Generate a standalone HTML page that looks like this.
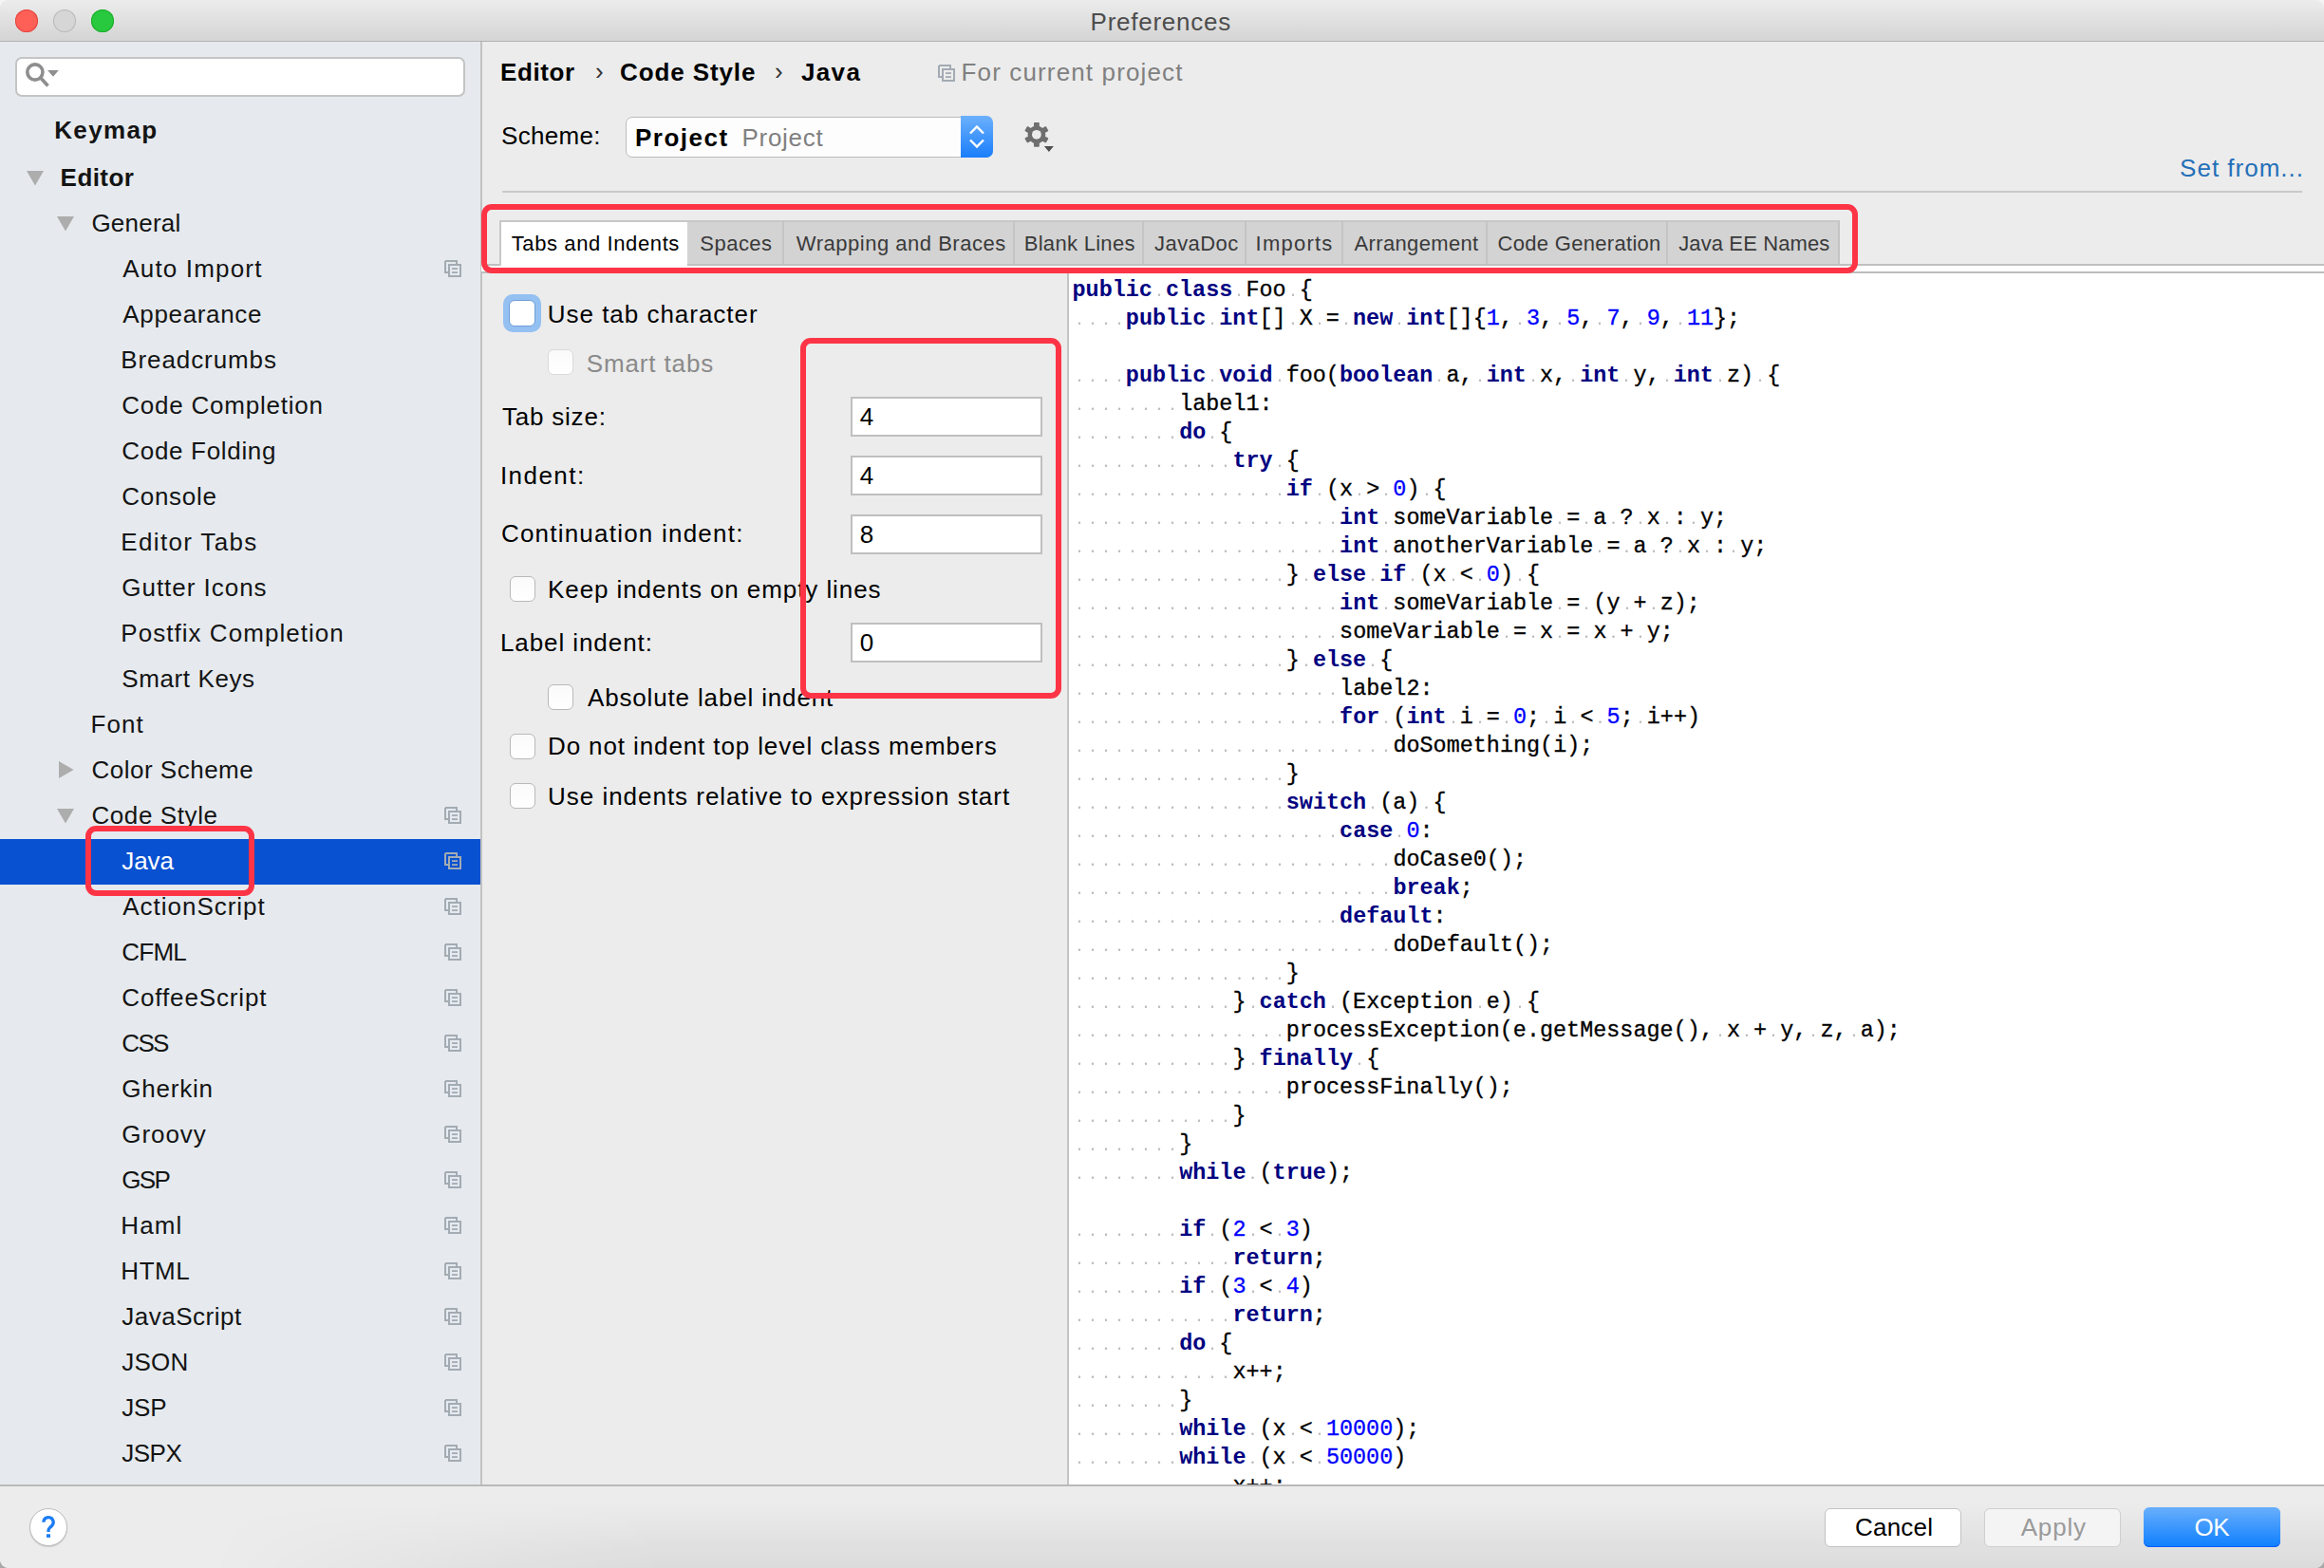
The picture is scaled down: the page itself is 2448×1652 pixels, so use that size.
<!DOCTYPE html>
<html><head><meta charset='utf-8'><style>
html,body{margin:0;padding:0;width:2448px;height:1652px;overflow:hidden;background:linear-gradient(#f4f4f4 0,#f4f4f4 50%,#a8a8a8 50%)}
.ab{position:absolute}
.t{position:absolute;font-family:"Liberation Sans",sans-serif;line-height:40px;white-space:pre}
.cb{background:linear-gradient(#fafafa,#fff);border:1.5px solid #b9b9b9;border-radius:6px;box-sizing:border-box}
.fld{background:#fff;border:2px solid #bfbfbf;box-sizing:border-box}
.code{position:absolute;left:1129.5px;top:291px;font-family:"Liberation Mono",monospace;font-size:23.45px;line-height:30px;white-space:pre;color:#000;-webkit-text-stroke:0.3px currentColor}
.code b{color:#000080;font-weight:700;-webkit-text-stroke:0}
.code u{color:#0000ff;text-decoration:none}
.code i{color:transparent;font-style:normal;-webkit-text-stroke:0;background:radial-gradient(circle at 50% 18.7px,#bdbdbd 0,#bdbdbd 0.9px,rgba(189,189,189,0) 1.6px)}
.red{position:absolute;border:6px solid #fd3446;border-radius:11px;box-sizing:border-box}
</style></head><body>
<div id='win' class='ab' style='left:0;top:0;width:2448px;height:1652px;border-radius:9px;overflow:hidden;background:#ececec'>
<!-- title bar -->
<div class='ab' style='left:0;top:0;width:2448px;height:43px;background:linear-gradient(#ececec,#d4d4d4)'></div>
<div class='ab' style='left:0;top:43px;width:2448px;height:1px;background:#b1b1b1'></div>
<div class='ab' style='left:16px;top:10px;width:24px;height:24px;border-radius:50%;background:#fe5f57;box-shadow:inset 0 0 0 1px #e2463f'></div>
<div class='ab' style='left:56px;top:10px;width:24px;height:24px;border-radius:50%;background:#d6d6d6;box-shadow:inset 0 0 0 1px #b9b9b9'></div>
<div class='ab' style='left:96px;top:10px;width:24px;height:24px;border-radius:50%;background:#28c93f;box-shadow:inset 0 0 0 1px #1aab29'></div>
<!-- sidebar -->
<div class='ab' style='left:0;top:44px;width:506px;height:1520px;background:#e6eaee'></div>
<div class='ab' style='left:506px;top:44px;width:2px;height:1520px;background:#c2c2c2'></div>
<div class='ab' style='left:16px;top:60px;width:474px;height:42px;background:#fff;border:2px solid #c4c4c4;border-radius:7px;box-sizing:border-box'></div>
<svg class='ab' style='left:24px;top:64px' width='40' height='30' viewBox='0 0 40 30'>
<circle cx='12.9' cy='12' r='8.1' fill='none' stroke='#8e8e8e' stroke-width='3.6'/>
<path d='M18.8 18L26.5 26.5' stroke='#8e8e8e' stroke-width='3.6'/>
<path d='M26.1 10H37.8L32 16.7Z' fill='#8e8e8e'/></svg>
<div class='ab' style='left:0;top:884px;width:506px;height:48px;background:#0851d1'></div>
<svg class='ab' style='left:28px;top:180px' width='18' height='15.5'><path d='M0 0H18L9.0 15.5Z' fill='#adadad'/></svg><svg class='ab' style='left:60px;top:228px' width='18' height='15.5'><path d='M0 0H18L9.0 15.5Z' fill='#adadad'/></svg><svg class='ab' style='left:62px;top:802px' width='15.6' height='18'><path d='M0 0L15.6 9.0L0 18Z' fill='#adadad'/></svg><svg class='ab' style='left:60px;top:852px' width='18' height='15.5'><path d='M0 0H18L9.0 15.5Z' fill='#adadad'/></svg>
<svg class='ab' style='left:468px;top:274px' width='20' height='20' viewBox='0 0 20 20'>
<path d='M1 1H13V4.5M4.5 13H1V1' fill='none' stroke='#a3abb3' stroke-width='2'/>
<rect x='5' y='5' width='12' height='12' fill='none' stroke='#a3abb3' stroke-width='2'/>
<rect x='8' y='8.2' width='6' height='1.8' fill='#a3abb3'/><rect x='8' y='12.2' width='6' height='1.8' fill='#a3abb3'/></svg>
<svg class='ab' style='left:468px;top:850px' width='20' height='20' viewBox='0 0 20 20'>
<path d='M1 1H13V4.5M4.5 13H1V1' fill='none' stroke='#a3abb3' stroke-width='2'/>
<rect x='5' y='5' width='12' height='12' fill='none' stroke='#a3abb3' stroke-width='2'/>
<rect x='8' y='8.2' width='6' height='1.8' fill='#a3abb3'/><rect x='8' y='12.2' width='6' height='1.8' fill='#a3abb3'/></svg>
<svg class='ab' style='left:468px;top:898px' width='20' height='20' viewBox='0 0 20 20'>
<path d='M1 1H13V4.5M4.5 13H1V1' fill='none' stroke='#a3abb3' stroke-width='2'/>
<rect x='5' y='5' width='12' height='12' fill='none' stroke='#a3abb3' stroke-width='2'/>
<rect x='8' y='8.2' width='6' height='1.8' fill='#a3abb3'/><rect x='8' y='12.2' width='6' height='1.8' fill='#a3abb3'/></svg>
<svg class='ab' style='left:468px;top:946px' width='20' height='20' viewBox='0 0 20 20'>
<path d='M1 1H13V4.5M4.5 13H1V1' fill='none' stroke='#a3abb3' stroke-width='2'/>
<rect x='5' y='5' width='12' height='12' fill='none' stroke='#a3abb3' stroke-width='2'/>
<rect x='8' y='8.2' width='6' height='1.8' fill='#a3abb3'/><rect x='8' y='12.2' width='6' height='1.8' fill='#a3abb3'/></svg>
<svg class='ab' style='left:468px;top:994px' width='20' height='20' viewBox='0 0 20 20'>
<path d='M1 1H13V4.5M4.5 13H1V1' fill='none' stroke='#a3abb3' stroke-width='2'/>
<rect x='5' y='5' width='12' height='12' fill='none' stroke='#a3abb3' stroke-width='2'/>
<rect x='8' y='8.2' width='6' height='1.8' fill='#a3abb3'/><rect x='8' y='12.2' width='6' height='1.8' fill='#a3abb3'/></svg>
<svg class='ab' style='left:468px;top:1042px' width='20' height='20' viewBox='0 0 20 20'>
<path d='M1 1H13V4.5M4.5 13H1V1' fill='none' stroke='#a3abb3' stroke-width='2'/>
<rect x='5' y='5' width='12' height='12' fill='none' stroke='#a3abb3' stroke-width='2'/>
<rect x='8' y='8.2' width='6' height='1.8' fill='#a3abb3'/><rect x='8' y='12.2' width='6' height='1.8' fill='#a3abb3'/></svg>
<svg class='ab' style='left:468px;top:1090px' width='20' height='20' viewBox='0 0 20 20'>
<path d='M1 1H13V4.5M4.5 13H1V1' fill='none' stroke='#a3abb3' stroke-width='2'/>
<rect x='5' y='5' width='12' height='12' fill='none' stroke='#a3abb3' stroke-width='2'/>
<rect x='8' y='8.2' width='6' height='1.8' fill='#a3abb3'/><rect x='8' y='12.2' width='6' height='1.8' fill='#a3abb3'/></svg>
<svg class='ab' style='left:468px;top:1138px' width='20' height='20' viewBox='0 0 20 20'>
<path d='M1 1H13V4.5M4.5 13H1V1' fill='none' stroke='#a3abb3' stroke-width='2'/>
<rect x='5' y='5' width='12' height='12' fill='none' stroke='#a3abb3' stroke-width='2'/>
<rect x='8' y='8.2' width='6' height='1.8' fill='#a3abb3'/><rect x='8' y='12.2' width='6' height='1.8' fill='#a3abb3'/></svg>
<svg class='ab' style='left:468px;top:1186px' width='20' height='20' viewBox='0 0 20 20'>
<path d='M1 1H13V4.5M4.5 13H1V1' fill='none' stroke='#a3abb3' stroke-width='2'/>
<rect x='5' y='5' width='12' height='12' fill='none' stroke='#a3abb3' stroke-width='2'/>
<rect x='8' y='8.2' width='6' height='1.8' fill='#a3abb3'/><rect x='8' y='12.2' width='6' height='1.8' fill='#a3abb3'/></svg>
<svg class='ab' style='left:468px;top:1234px' width='20' height='20' viewBox='0 0 20 20'>
<path d='M1 1H13V4.5M4.5 13H1V1' fill='none' stroke='#a3abb3' stroke-width='2'/>
<rect x='5' y='5' width='12' height='12' fill='none' stroke='#a3abb3' stroke-width='2'/>
<rect x='8' y='8.2' width='6' height='1.8' fill='#a3abb3'/><rect x='8' y='12.2' width='6' height='1.8' fill='#a3abb3'/></svg>
<svg class='ab' style='left:468px;top:1282px' width='20' height='20' viewBox='0 0 20 20'>
<path d='M1 1H13V4.5M4.5 13H1V1' fill='none' stroke='#a3abb3' stroke-width='2'/>
<rect x='5' y='5' width='12' height='12' fill='none' stroke='#a3abb3' stroke-width='2'/>
<rect x='8' y='8.2' width='6' height='1.8' fill='#a3abb3'/><rect x='8' y='12.2' width='6' height='1.8' fill='#a3abb3'/></svg>
<svg class='ab' style='left:468px;top:1330px' width='20' height='20' viewBox='0 0 20 20'>
<path d='M1 1H13V4.5M4.5 13H1V1' fill='none' stroke='#a3abb3' stroke-width='2'/>
<rect x='5' y='5' width='12' height='12' fill='none' stroke='#a3abb3' stroke-width='2'/>
<rect x='8' y='8.2' width='6' height='1.8' fill='#a3abb3'/><rect x='8' y='12.2' width='6' height='1.8' fill='#a3abb3'/></svg>
<svg class='ab' style='left:468px;top:1378px' width='20' height='20' viewBox='0 0 20 20'>
<path d='M1 1H13V4.5M4.5 13H1V1' fill='none' stroke='#a3abb3' stroke-width='2'/>
<rect x='5' y='5' width='12' height='12' fill='none' stroke='#a3abb3' stroke-width='2'/>
<rect x='8' y='8.2' width='6' height='1.8' fill='#a3abb3'/><rect x='8' y='12.2' width='6' height='1.8' fill='#a3abb3'/></svg>
<svg class='ab' style='left:468px;top:1426px' width='20' height='20' viewBox='0 0 20 20'>
<path d='M1 1H13V4.5M4.5 13H1V1' fill='none' stroke='#a3abb3' stroke-width='2'/>
<rect x='5' y='5' width='12' height='12' fill='none' stroke='#a3abb3' stroke-width='2'/>
<rect x='8' y='8.2' width='6' height='1.8' fill='#a3abb3'/><rect x='8' y='12.2' width='6' height='1.8' fill='#a3abb3'/></svg>
<svg class='ab' style='left:468px;top:1474px' width='20' height='20' viewBox='0 0 20 20'>
<path d='M1 1H13V4.5M4.5 13H1V1' fill='none' stroke='#a3abb3' stroke-width='2'/>
<rect x='5' y='5' width='12' height='12' fill='none' stroke='#a3abb3' stroke-width='2'/>
<rect x='8' y='8.2' width='6' height='1.8' fill='#a3abb3'/><rect x='8' y='12.2' width='6' height='1.8' fill='#a3abb3'/></svg>
<svg class='ab' style='left:468px;top:1522px' width='20' height='20' viewBox='0 0 20 20'>
<path d='M1 1H13V4.5M4.5 13H1V1' fill='none' stroke='#a3abb3' stroke-width='2'/>
<rect x='5' y='5' width='12' height='12' fill='none' stroke='#a3abb3' stroke-width='2'/>
<rect x='8' y='8.2' width='6' height='1.8' fill='#a3abb3'/><rect x='8' y='12.2' width='6' height='1.8' fill='#a3abb3'/></svg>
<!-- right panel -->
<div class='ab' style='left:1124px;top:288px;width:2px;height:1276px;background:#c4c4c4'></div>
<div class='ab' style='left:1126px;top:288px;width:1322px;height:1276px;background:#fff'></div>
<div class='ab' style='left:507px;top:278px;width:1941px;height:2px;background:#c0c0c0'></div>
<div class='ab' style='left:507px;top:280px;width:1941px;height:6px;background:#fff'></div>
<div class='ab' style='left:507px;top:286px;width:1941px;height:2px;background:#bdbdbd'></div>
<div class='ab' style='left:529px;top:201px;width:1896px;height:2px;background:#c9c9c9'></div>
<div class='ab' style='left:525.5px;top:232px;width:198.29999999999995px;height:48px;background:#fff;border-left:2px solid #c8c8c8;border-top:2px solid #c8c8c8;box-sizing:border-box'></div>
<div class='ab' style='left:723.8px;top:232px;width:102.20000000000005px;height:46px;background:#d3d3d3;border-right:2px solid #c4c4c4;border-top:2px solid #c8c8c8;box-sizing:border-box'></div>
<div class='ab' style='left:826px;top:232px;width:242.70000000000005px;height:46px;background:#d3d3d3;border-right:2px solid #c4c4c4;border-top:2px solid #c8c8c8;box-sizing:border-box'></div>
<div class='ab' style='left:1068.7px;top:232px;width:135.89999999999986px;height:46px;background:#d3d3d3;border-right:2px solid #c4c4c4;border-top:2px solid #c8c8c8;box-sizing:border-box'></div>
<div class='ab' style='left:1204.6px;top:232px;width:108.20000000000005px;height:46px;background:#d3d3d3;border-right:2px solid #c4c4c4;border-top:2px solid #c8c8c8;box-sizing:border-box'></div>
<div class='ab' style='left:1312.8px;top:232px;width:102.0px;height:46px;background:#d3d3d3;border-right:2px solid #c4c4c4;border-top:2px solid #c8c8c8;box-sizing:border-box'></div>
<div class='ab' style='left:1414.8px;top:232px;width:152.0px;height:46px;background:#d3d3d3;border-right:2px solid #c4c4c4;border-top:2px solid #c8c8c8;box-sizing:border-box'></div>
<div class='ab' style='left:1566.8px;top:232px;width:190.20000000000005px;height:46px;background:#d3d3d3;border-right:2px solid #c4c4c4;border-top:2px solid #c8c8c8;box-sizing:border-box'></div>
<div class='ab' style='left:1757px;top:232px;width:180.5px;height:46px;background:#d3d3d3;border-right:2px solid #c4c4c4;border-top:2px solid #c8c8c8;box-sizing:border-box'></div>
<!-- combo -->
<div class='ab' style='left:658.5px;top:122.5px;width:387px;height:43px;background:#fdfdfd;border:1.5px solid #bcbcbc;border-radius:7px;box-sizing:border-box'></div>
<div class='ab' style='left:1012px;top:122px;width:34px;height:44px;background:linear-gradient(#6cb0fc,#1a7efb);border-radius:0 7px 7px 0'></div>
<svg class='ab' style='left:1012px;top:122px' width='34' height='44'><path d='M10 18.5L17 11.5L24 18.5M10 25.5L17 32.5L24 25.5' fill='none' stroke='#fff' stroke-width='2.4'/></svg>
<svg class='ab' style='left:1076px;top:126px' width='36' height='36' viewBox='0 0 36 36'>
<g transform='translate(15.9 15.8)' fill='#6e6e6e'>
<circle r='9.4'/>
<rect x='-2.9' y='-12.9' width='5.8' height='7' rx='0.8'/>
<rect x='-2.9' y='-12.9' width='5.8' height='7' rx='0.8' transform='rotate(60)'/>
<rect x='-2.9' y='-12.9' width='5.8' height='7' rx='0.8' transform='rotate(120)'/>
<rect x='-2.9' y='-12.9' width='5.8' height='7' rx='0.8' transform='rotate(180)'/>
<rect x='-2.9' y='-12.9' width='5.8' height='7' rx='0.8' transform='rotate(240)'/>
<rect x='-2.9' y='-12.9' width='5.8' height='7' rx='0.8' transform='rotate(300)'/>
<circle r='4.9' fill='#ececec'/></g>
<path d='M23.9 27.9H33.9L28.9 33.9Z' fill='#4f4f4f'/></svg>
<svg class='ab' style='left:988px;top:68px' width='20' height='20' viewBox='0 0 20 20'>
<path d='M1 1H13V4.5M4.5 13H1V1' fill='none' stroke='#a3abb3' stroke-width='2'/>
<rect x='5' y='5' width='12' height='12' fill='none' stroke='#a3abb3' stroke-width='2'/>
<rect x='8' y='8.2' width='6' height='1.8' fill='#a3abb3'/><rect x='8' y='12.2' width='6' height='1.8' fill='#a3abb3'/></svg>
<div class='t' style='left:627px;top:55px;font-size:26px;color:#333'>›</div>
<div class='t' style='left:816px;top:55px;font-size:26px;color:#333'>›</div>
<div class='ab cb' style='left:576.5px;top:368.3px;width:27px;height:27px;border-color:#dadada'></div><div class='ab cb' style='left:536.5px;top:606.5px;width:27px;height:27px;border-color:#b9b9b9'></div><div class='ab cb' style='left:576.5px;top:720.5px;width:27px;height:27px;border-color:#b9b9b9'></div><div class='ab cb' style='left:536.5px;top:772.5px;width:27px;height:27px;border-color:#b9b9b9'></div><div class='ab cb' style='left:536.5px;top:824.5px;width:27px;height:27px;border-color:#b9b9b9'></div><div class='ab' style='left:530px;top:310px;width:40px;height:40px;border-radius:10px;background:#94c0f2'></div><div class='ab' style='left:536px;top:316px;width:28px;height:28px;border-radius:6px;background:#fff;border:1.5px solid #6f9fd8;box-sizing:border-box'></div>
<div class='ab fld' style='left:896px;top:418px;width:202px;height:42px'></div><div class='ab fld' style='left:896px;top:480px;width:202px;height:42px'></div><div class='ab fld' style='left:896px;top:542px;width:202px;height:42px'></div><div class='ab fld' style='left:896px;top:656px;width:202px;height:42px'></div>
<div class='code'><b>public</b><i>.</i><b>class</b><i>.</i>Foo<i>.</i>{
<i>.</i><i>.</i><i>.</i><i>.</i><b>public</b><i>.</i><b>int</b>[]<i>.</i>X<i>.</i>=<i>.</i><b>new</b><i>.</i><b>int</b>[]{<u>1</u>,<i>.</i><u>3</u>,<i>.</i><u>5</u>,<i>.</i><u>7</u>,<i>.</i><u>9</u>,<i>.</i><u>11</u>};

<i>.</i><i>.</i><i>.</i><i>.</i><b>public</b><i>.</i><b>void</b><i>.</i>foo(<b>boolean</b><i>.</i>a,<i>.</i><b>int</b><i>.</i>x,<i>.</i><b>int</b><i>.</i>y,<i>.</i><b>int</b><i>.</i>z)<i>.</i>{
<i>.</i><i>.</i><i>.</i><i>.</i><i>.</i><i>.</i><i>.</i><i>.</i>label1:
<i>.</i><i>.</i><i>.</i><i>.</i><i>.</i><i>.</i><i>.</i><i>.</i><b>do</b><i>.</i>{
<i>.</i><i>.</i><i>.</i><i>.</i><i>.</i><i>.</i><i>.</i><i>.</i><i>.</i><i>.</i><i>.</i><i>.</i><b>try</b><i>.</i>{
<i>.</i><i>.</i><i>.</i><i>.</i><i>.</i><i>.</i><i>.</i><i>.</i><i>.</i><i>.</i><i>.</i><i>.</i><i>.</i><i>.</i><i>.</i><i>.</i><b>if</b><i>.</i>(x<i>.</i>&gt;<i>.</i><u>0</u>)<i>.</i>{
<i>.</i><i>.</i><i>.</i><i>.</i><i>.</i><i>.</i><i>.</i><i>.</i><i>.</i><i>.</i><i>.</i><i>.</i><i>.</i><i>.</i><i>.</i><i>.</i><i>.</i><i>.</i><i>.</i><i>.</i><b>int</b><i>.</i>someVariable<i>.</i>=<i>.</i>a<i>.</i>?<i>.</i>x<i>.</i>:<i>.</i>y;
<i>.</i><i>.</i><i>.</i><i>.</i><i>.</i><i>.</i><i>.</i><i>.</i><i>.</i><i>.</i><i>.</i><i>.</i><i>.</i><i>.</i><i>.</i><i>.</i><i>.</i><i>.</i><i>.</i><i>.</i><b>int</b><i>.</i>anotherVariable<i>.</i>=<i>.</i>a<i>.</i>?<i>.</i>x<i>.</i>:<i>.</i>y;
<i>.</i><i>.</i><i>.</i><i>.</i><i>.</i><i>.</i><i>.</i><i>.</i><i>.</i><i>.</i><i>.</i><i>.</i><i>.</i><i>.</i><i>.</i><i>.</i>}<i>.</i><b>else</b><i>.</i><b>if</b><i>.</i>(x<i>.</i>&lt;<i>.</i><u>0</u>)<i>.</i>{
<i>.</i><i>.</i><i>.</i><i>.</i><i>.</i><i>.</i><i>.</i><i>.</i><i>.</i><i>.</i><i>.</i><i>.</i><i>.</i><i>.</i><i>.</i><i>.</i><i>.</i><i>.</i><i>.</i><i>.</i><b>int</b><i>.</i>someVariable<i>.</i>=<i>.</i>(y<i>.</i>+<i>.</i>z);
<i>.</i><i>.</i><i>.</i><i>.</i><i>.</i><i>.</i><i>.</i><i>.</i><i>.</i><i>.</i><i>.</i><i>.</i><i>.</i><i>.</i><i>.</i><i>.</i><i>.</i><i>.</i><i>.</i><i>.</i>someVariable<i>.</i>=<i>.</i>x<i>.</i>=<i>.</i>x<i>.</i>+<i>.</i>y;
<i>.</i><i>.</i><i>.</i><i>.</i><i>.</i><i>.</i><i>.</i><i>.</i><i>.</i><i>.</i><i>.</i><i>.</i><i>.</i><i>.</i><i>.</i><i>.</i>}<i>.</i><b>else</b><i>.</i>{
<i>.</i><i>.</i><i>.</i><i>.</i><i>.</i><i>.</i><i>.</i><i>.</i><i>.</i><i>.</i><i>.</i><i>.</i><i>.</i><i>.</i><i>.</i><i>.</i><i>.</i><i>.</i><i>.</i><i>.</i>label2:
<i>.</i><i>.</i><i>.</i><i>.</i><i>.</i><i>.</i><i>.</i><i>.</i><i>.</i><i>.</i><i>.</i><i>.</i><i>.</i><i>.</i><i>.</i><i>.</i><i>.</i><i>.</i><i>.</i><i>.</i><b>for</b><i>.</i>(<b>int</b><i>.</i>i<i>.</i>=<i>.</i><u>0</u>;<i>.</i>i<i>.</i>&lt;<i>.</i><u>5</u>;<i>.</i>i++)
<i>.</i><i>.</i><i>.</i><i>.</i><i>.</i><i>.</i><i>.</i><i>.</i><i>.</i><i>.</i><i>.</i><i>.</i><i>.</i><i>.</i><i>.</i><i>.</i><i>.</i><i>.</i><i>.</i><i>.</i><i>.</i><i>.</i><i>.</i><i>.</i>doSomething(i);
<i>.</i><i>.</i><i>.</i><i>.</i><i>.</i><i>.</i><i>.</i><i>.</i><i>.</i><i>.</i><i>.</i><i>.</i><i>.</i><i>.</i><i>.</i><i>.</i>}
<i>.</i><i>.</i><i>.</i><i>.</i><i>.</i><i>.</i><i>.</i><i>.</i><i>.</i><i>.</i><i>.</i><i>.</i><i>.</i><i>.</i><i>.</i><i>.</i><b>switch</b><i>.</i>(a)<i>.</i>{
<i>.</i><i>.</i><i>.</i><i>.</i><i>.</i><i>.</i><i>.</i><i>.</i><i>.</i><i>.</i><i>.</i><i>.</i><i>.</i><i>.</i><i>.</i><i>.</i><i>.</i><i>.</i><i>.</i><i>.</i><b>case</b><i>.</i><u>0</u>:
<i>.</i><i>.</i><i>.</i><i>.</i><i>.</i><i>.</i><i>.</i><i>.</i><i>.</i><i>.</i><i>.</i><i>.</i><i>.</i><i>.</i><i>.</i><i>.</i><i>.</i><i>.</i><i>.</i><i>.</i><i>.</i><i>.</i><i>.</i><i>.</i>doCase0();
<i>.</i><i>.</i><i>.</i><i>.</i><i>.</i><i>.</i><i>.</i><i>.</i><i>.</i><i>.</i><i>.</i><i>.</i><i>.</i><i>.</i><i>.</i><i>.</i><i>.</i><i>.</i><i>.</i><i>.</i><i>.</i><i>.</i><i>.</i><i>.</i><b>break</b>;
<i>.</i><i>.</i><i>.</i><i>.</i><i>.</i><i>.</i><i>.</i><i>.</i><i>.</i><i>.</i><i>.</i><i>.</i><i>.</i><i>.</i><i>.</i><i>.</i><i>.</i><i>.</i><i>.</i><i>.</i><b>default</b>:
<i>.</i><i>.</i><i>.</i><i>.</i><i>.</i><i>.</i><i>.</i><i>.</i><i>.</i><i>.</i><i>.</i><i>.</i><i>.</i><i>.</i><i>.</i><i>.</i><i>.</i><i>.</i><i>.</i><i>.</i><i>.</i><i>.</i><i>.</i><i>.</i>doDefault();
<i>.</i><i>.</i><i>.</i><i>.</i><i>.</i><i>.</i><i>.</i><i>.</i><i>.</i><i>.</i><i>.</i><i>.</i><i>.</i><i>.</i><i>.</i><i>.</i>}
<i>.</i><i>.</i><i>.</i><i>.</i><i>.</i><i>.</i><i>.</i><i>.</i><i>.</i><i>.</i><i>.</i><i>.</i>}<i>.</i><b>catch</b><i>.</i>(Exception<i>.</i>e)<i>.</i>{
<i>.</i><i>.</i><i>.</i><i>.</i><i>.</i><i>.</i><i>.</i><i>.</i><i>.</i><i>.</i><i>.</i><i>.</i><i>.</i><i>.</i><i>.</i><i>.</i>processException(e.getMessage(),<i>.</i>x<i>.</i>+<i>.</i>y,<i>.</i>z,<i>.</i>a);
<i>.</i><i>.</i><i>.</i><i>.</i><i>.</i><i>.</i><i>.</i><i>.</i><i>.</i><i>.</i><i>.</i><i>.</i>}<i>.</i><b>finally</b><i>.</i>{
<i>.</i><i>.</i><i>.</i><i>.</i><i>.</i><i>.</i><i>.</i><i>.</i><i>.</i><i>.</i><i>.</i><i>.</i><i>.</i><i>.</i><i>.</i><i>.</i>processFinally();
<i>.</i><i>.</i><i>.</i><i>.</i><i>.</i><i>.</i><i>.</i><i>.</i><i>.</i><i>.</i><i>.</i><i>.</i>}
<i>.</i><i>.</i><i>.</i><i>.</i><i>.</i><i>.</i><i>.</i><i>.</i>}
<i>.</i><i>.</i><i>.</i><i>.</i><i>.</i><i>.</i><i>.</i><i>.</i><b>while</b><i>.</i>(<b>true</b>);

<i>.</i><i>.</i><i>.</i><i>.</i><i>.</i><i>.</i><i>.</i><i>.</i><b>if</b><i>.</i>(<u>2</u><i>.</i>&lt;<i>.</i><u>3</u>)
<i>.</i><i>.</i><i>.</i><i>.</i><i>.</i><i>.</i><i>.</i><i>.</i><i>.</i><i>.</i><i>.</i><i>.</i><b>return</b>;
<i>.</i><i>.</i><i>.</i><i>.</i><i>.</i><i>.</i><i>.</i><i>.</i><b>if</b><i>.</i>(<u>3</u><i>.</i>&lt;<i>.</i><u>4</u>)
<i>.</i><i>.</i><i>.</i><i>.</i><i>.</i><i>.</i><i>.</i><i>.</i><i>.</i><i>.</i><i>.</i><i>.</i><b>return</b>;
<i>.</i><i>.</i><i>.</i><i>.</i><i>.</i><i>.</i><i>.</i><i>.</i><b>do</b><i>.</i>{
<i>.</i><i>.</i><i>.</i><i>.</i><i>.</i><i>.</i><i>.</i><i>.</i><i>.</i><i>.</i><i>.</i><i>.</i>x++;
<i>.</i><i>.</i><i>.</i><i>.</i><i>.</i><i>.</i><i>.</i><i>.</i>}
<i>.</i><i>.</i><i>.</i><i>.</i><i>.</i><i>.</i><i>.</i><i>.</i><b>while</b><i>.</i>(x<i>.</i>&lt;<i>.</i><u>10000</u>);
<i>.</i><i>.</i><i>.</i><i>.</i><i>.</i><i>.</i><i>.</i><i>.</i><b>while</b><i>.</i>(x<i>.</i>&lt;<i>.</i><u>50000</u>)
<i>.</i><i>.</i><i>.</i><i>.</i><i>.</i><i>.</i><i>.</i><i>.</i><i>.</i><i>.</i><i>.</i><i>.</i>x++;</div>
<!-- bottom -->
<div class='ab' style='left:0;top:1564px;width:2448px;height:2px;background:#b9b9b9'></div>
<div class='ab' style='left:0;top:1566px;width:2448px;height:86px;background:#ececec'></div><div class='ab' style='left:0;top:1566px;width:2448px;height:86px;background:linear-gradient(rgba(0,0,0,0) 20%,rgba(0,0,0,.07));-webkit-mask-image:linear-gradient(to right,transparent 220px,#000 700px)'></div>
<div class='ab' style='left:31px;top:1589px;width:40px;height:40px;border-radius:50%;background:#fff;border:1.5px solid #bdbdbd;box-sizing:border-box;box-shadow:0 1px 1px rgba(0,0,0,.15)'></div>
<svg class='ab' style='left:31px;top:1589px' width='40' height='40'><path d='M14.9 14.8A5.15 5.15 0 1 1 23.6 18.5L21.2 20.9Q20 22.1 20 23.6V25' fill='none' stroke='#1b7cf5' stroke-width='3.3'/><rect x='18' y='27.3' width='4' height='3.6' fill='#1b7cf5'/></svg>
<div class='ab' style='left:1922px;top:1588.5px;width:144px;height:41px;background:#fff;border:1.5px solid #c2c2c2;border-radius:6px;box-sizing:border-box'></div>
<div class='ab' style='left:2090px;top:1588.5px;width:144px;height:41px;background:#f4f4f4;border:1.5px solid #cfcfcf;border-radius:6px;box-sizing:border-box'></div>
<div class='ab' style='left:2257.5px;top:1588px;width:144px;height:42px;background:linear-gradient(#69affc,#0e7ffe);border-radius:6px;box-shadow:inset 0 -1px 0 #0a5cf5'></div>
<div class='t' style='left:1148.6px;top:2.7px;font-size:26px;font-weight:400;color:#4d4d4d;letter-spacing:0.74px'>Preferences</div>
<div class='t' style='left:57.2px;top:117.2px;font-size:26px;font-weight:700;color:#141414;letter-spacing:1.36px'>Keymap</div>
<div class='t' style='left:63.6px;top:166.8px;font-size:26px;font-weight:700;color:#141414;letter-spacing:0.44px'>Editor</div>
<div class='t' style='left:96.4px;top:214.8px;font-size:26px;font-weight:400;color:#141414;letter-spacing:0.233px'>General</div>
<div class='t' style='left:129.3px;top:262.8px;font-size:26px;font-weight:400;color:#141414;letter-spacing:1.17px'>Auto Import</div>
<div class='t' style='left:129.3px;top:310.8px;font-size:26px;font-weight:400;color:#141414;letter-spacing:0.656px'>Appearance</div>
<div class='t' style='left:127.3px;top:358.8px;font-size:26px;font-weight:400;color:#141414;letter-spacing:0.9px'>Breadcrumbs</div>
<div class='t' style='left:128.3px;top:406.8px;font-size:26px;font-weight:400;color:#141414;letter-spacing:0.764px'>Code Completion</div>
<div class='t' style='left:128.3px;top:454.8px;font-size:26px;font-weight:400;color:#141414;letter-spacing:0.682px'>Code Folding</div>
<div class='t' style='left:128.3px;top:502.8px;font-size:26px;font-weight:400;color:#141414;letter-spacing:0.7px'>Console</div>
<div class='t' style='left:127.3px;top:550.8px;font-size:26px;font-weight:400;color:#141414;letter-spacing:1.34px'>Editor Tabs</div>
<div class='t' style='left:128.3px;top:598.8px;font-size:26px;font-weight:400;color:#141414;letter-spacing:0.973px'>Gutter Icons</div>
<div class='t' style='left:127.3px;top:646.8px;font-size:26px;font-weight:400;color:#141414;letter-spacing:1.041px'>Postfix Completion</div>
<div class='t' style='left:128.3px;top:694.8px;font-size:26px;font-weight:400;color:#141414;letter-spacing:0.6px'>Smart Keys</div>
<div class='t' style='left:95.4px;top:742.8px;font-size:26px;font-weight:400;color:#141414;letter-spacing:1.133px'>Font</div>
<div class='t' style='left:96.4px;top:790.8px;font-size:26px;font-weight:400;color:#141414;letter-spacing:0.509px'>Color Scheme</div>
<div class='t' style='left:96.4px;top:838.8px;font-size:26px;font-weight:400;color:#141414;letter-spacing:0.611px'>Code Style</div>
<div class='t' style='left:128.3px;top:886.8px;font-size:26px;font-weight:400;color:#fff;letter-spacing:-0.1px'>Java</div>
<div class='t' style='left:129.3px;top:934.8px;font-size:26px;font-weight:400;color:#141414;letter-spacing:0.973px'>ActionScript</div>
<div class='t' style='left:128.3px;top:982.8px;font-size:26px;font-weight:400;color:#141414;letter-spacing:-0.767px'>CFML</div>
<div class='t' style='left:128.3px;top:1030.8px;font-size:26px;font-weight:400;color:#141414;letter-spacing:0.882px'>CoffeeScript</div>
<div class='t' style='left:128.3px;top:1078.8px;font-size:26px;font-weight:400;color:#141414;letter-spacing:-1.65px'>CSS</div>
<div class='t' style='left:128.3px;top:1126.8px;font-size:26px;font-weight:400;color:#141414;letter-spacing:0.783px'>Gherkin</div>
<div class='t' style='left:128.3px;top:1174.8px;font-size:26px;font-weight:400;color:#141414;letter-spacing:0.94px'>Groovy</div>
<div class='t' style='left:128.3px;top:1222.8px;font-size:26px;font-weight:400;color:#141414;letter-spacing:-1.65px'>GSP</div>
<div class='t' style='left:127.3px;top:1270.8px;font-size:26px;font-weight:400;color:#141414;letter-spacing:1.1px'>Haml</div>
<div class='t' style='left:127.3px;top:1318.8px;font-size:26px;font-weight:400;color:#141414;letter-spacing:0.567px'>HTML</div>
<div class='t' style='left:128.3px;top:1366.8px;font-size:26px;font-weight:400;color:#141414;letter-spacing:0.511px'>JavaScript</div>
<div class='t' style='left:128.3px;top:1414.8px;font-size:26px;font-weight:400;color:#141414;letter-spacing:0.233px'>JSON</div>
<div class='t' style='left:128.3px;top:1462.8px;font-size:26px;font-weight:400;color:#141414;letter-spacing:-0.25px'>JSP</div>
<div class='t' style='left:128.3px;top:1510.8px;font-size:26px;font-weight:400;color:#141414;letter-spacing:-0.533px'>JSPX</div>
<div class='t' style='left:527px;top:56.4px;font-size:26px;font-weight:700;color:#000;letter-spacing:0.6px'>Editor</div>
<div class='t' style='left:653px;top:56.4px;font-size:26px;font-weight:700;color:#000;letter-spacing:0.889px'>Code Style</div>
<div class='t' style='left:844px;top:56.4px;font-size:26px;font-weight:700;color:#000;letter-spacing:1.333px'>Java</div>
<div class='t' style='left:1012.6px;top:56.4px;font-size:26px;font-weight:400;color:#808080;letter-spacing:1.133px'>For current project</div>
<div class='t' style='left:528px;top:122.5px;font-size:26px;font-weight:400;color:#000;letter-spacing:0.3px'>Scheme:</div>
<div class='t' style='left:669px;top:124.8px;font-size:26px;font-weight:700;color:#000;letter-spacing:1.5px'>Project</div>
<div class='t' style='left:781.5px;top:124.8px;font-size:26px;font-weight:400;color:#808080;letter-spacing:0.717px'>Project</div>
<div class='t' style='left:2296.1px;top:157.3px;font-size:26px;font-weight:400;color:#2470b8;letter-spacing:1.0px'>Set from...</div>
<div class='t' style='left:538.7px;top:237px;font-size:22px;font-weight:400;color:#000;letter-spacing:0.607px'>Tabs and Indents</div>
<div class='t' style='left:737.3px;top:237px;font-size:22px;font-weight:400;color:#3a3a3a;letter-spacing:0.48px'>Spaces</div>
<div class='t' style='left:838.8px;top:237px;font-size:22px;font-weight:400;color:#3a3a3a;letter-spacing:0.511px'>Wrapping and Braces</div>
<div class='t' style='left:1078.7px;top:237px;font-size:22px;font-weight:400;color:#3a3a3a;letter-spacing:0.3px'>Blank Lines</div>
<div class='t' style='left:1216px;top:237px;font-size:22px;font-weight:400;color:#3a3a3a;letter-spacing:0.45px'>JavaDoc</div>
<div class='t' style='left:1322.6px;top:237px;font-size:22px;font-weight:400;color:#3a3a3a;letter-spacing:1.233px'>Imports</div>
<div class='t' style='left:1426.6px;top:237px;font-size:22px;font-weight:400;color:#3a3a3a;letter-spacing:0.34px'>Arrangement</div>
<div class='t' style='left:1577.6px;top:237px;font-size:22px;font-weight:400;color:#3a3a3a;letter-spacing:0.3px'>Code Generation</div>
<div class='t' style='left:1768.2px;top:237px;font-size:22px;font-weight:400;color:#3a3a3a;letter-spacing:0.117px'>Java EE Names</div>
<div class='t' style='left:576.8px;top:310.6px;font-size:26px;font-weight:400;color:#000;letter-spacing:0.975px'>Use tab character</div>
<div class='t' style='left:617.8px;top:362.5px;font-size:26px;font-weight:400;color:#8a8a8a;letter-spacing:0.856px'>Smart tabs</div>
<div class='t' style='left:528.9px;top:418.5px;font-size:26px;font-weight:400;color:#000;letter-spacing:0.8px'>Tab size:</div>
<div class='t' style='left:526.9px;top:480.5px;font-size:26px;font-weight:400;color:#000;letter-spacing:1.45px'>Indent:</div>
<div class='t' style='left:527.9px;top:542.4px;font-size:26px;font-weight:400;color:#000;letter-spacing:1.221px'>Continuation indent:</div>
<div class='t' style='left:577px;top:601.2px;font-size:26px;font-weight:400;color:#000;letter-spacing:0.919px'>Keep indents on empty lines</div>
<div class='t' style='left:526.9px;top:656.8px;font-size:26px;font-weight:400;color:#000;letter-spacing:0.925px'>Label indent:</div>
<div class='t' style='left:619px;top:714.6px;font-size:26px;font-weight:400;color:#000;letter-spacing:0.84px'>Absolute label indent</div>
<div class='t' style='left:577px;top:766.4px;font-size:26px;font-weight:400;color:#000;letter-spacing:0.886px'>Do not indent top level class members</div>
<div class='t' style='left:577px;top:818.7px;font-size:26px;font-weight:400;color:#000;letter-spacing:0.979px'>Use indents relative to expression start</div>
<div class='t' style='left:905.7px;top:419px;font-size:26px;font-weight:400;color:#000;letter-spacing:0.0px'>4</div>
<div class='t' style='left:905.7px;top:481px;font-size:26px;font-weight:400;color:#000;letter-spacing:0.0px'>4</div>
<div class='t' style='left:905.7px;top:543px;font-size:26px;font-weight:400;color:#000;letter-spacing:0.0px'>8</div>
<div class='t' style='left:905.7px;top:657px;font-size:26px;font-weight:400;color:#000;letter-spacing:0.0px'>0</div>
<div class='t' style='left:1954px;top:1589px;font-size:26px;font-weight:400;color:#000;letter-spacing:0.2px'>Cancel</div>
<div class='t' style='left:2128.7px;top:1589px;font-size:26px;font-weight:400;color:#9a9a9a;letter-spacing:0.825px'>Apply</div>
<div class='t' style='left:2311.5px;top:1589px;font-size:26px;font-weight:400;color:#fff;letter-spacing:-0.5px'>OK</div>
<!-- annotations -->
<div class='red' style='left:506.7px;top:214.5px;width:1450.5px;height:73.5px'></div>
<div class='red' style='left:842.5px;top:356px;width:275.5px;height:379.7px'></div>
<div class='red' style='left:89.6px;top:870px;width:178.9px;height:74px'></div>
</div>
</body></html>
